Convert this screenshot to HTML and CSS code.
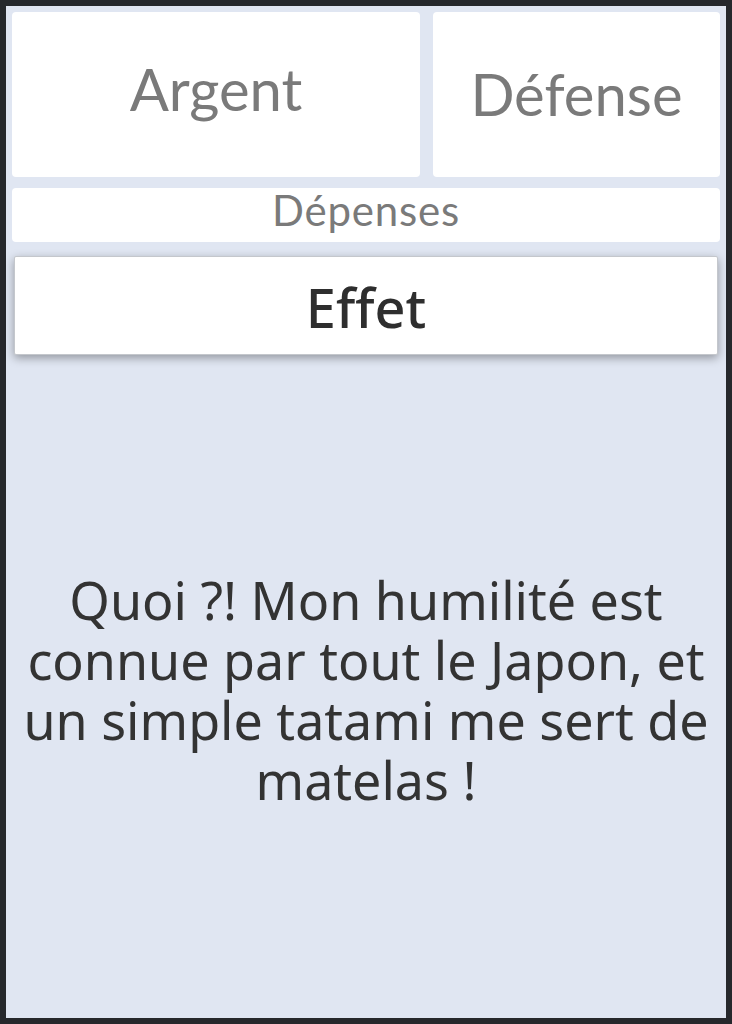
FILE: index.html
```html
<!DOCTYPE html>
<html lang="fr">
<head>
<meta charset="utf-8">
<title>Carte</title>
<link rel="stylesheet" href="styles.css">
</head>
<body>
<div class="frame">
  <div class="stats">
    <div class="card stat stat-argent"><span>Argent</span></div>
    <div class="card stat stat-defense"><span>Défense</span></div>
  </div>
  <div class="card depenses">Dépenses</div>
  <div class="card effet">Effet</div>
  <div class="desc">
    <p>Quoi ?! Mon humilité est connue par tout le Japon, et un simple tatami me sert de matelas !</p>
  </div>
</div>
</body>
</html>
```

FILE: styles.css
```css
html, body {
  margin: 0;
  padding: 0;
  background: #26282c;
}
.frame {
  margin: 6px;
  height: 1012px;
  box-sizing: border-box;
  background: #e0e6f2;
  padding: 6px;
  display: flex;
  flex-direction: column;
}
.card {
  background: #ffffff;
  border-radius: 4px;
}
.stats {
  display: grid;
  grid-template-columns: 408fr 287fr;
  gap: 13px;
  height: 165px;
}
.stat {
  display: flex;
  align-items: center;
  justify-content: center;
  font-family: "Lato", sans-serif;
  color: #7a7a7a;
}
.stat-argent span {
  font-size: 58px;
  margin-top: -12px;
}
.stat-defense span {
  font-size: 58px;
  margin-top: -2px;
}
.depenses {
  margin-top: 11px;
  height: 54px;
  display: flex;
  align-items: center;
  justify-content: center;
  font-family: "Lato", sans-serif;
  font-size: 42px;
  letter-spacing: 0.8px;
  color: #7a7a7a;
  padding-bottom: 10px;
  box-sizing: border-box;
}
.effet {
  margin: 14px 2px 0;
  height: 99px;
  box-sizing: border-box;
  border: 1px solid #c4c7cc;
  border-radius: 2px;
  box-shadow: 0 3px 10px rgba(0, 0, 0, 0.35);
  display: flex;
  align-items: center;
  justify-content: center;
  padding-top: 3px;
  font-family: "Noto Sans", sans-serif;
  font-weight: 500;
  font-size: 54px;
  color: #2e2e2e;
}
.desc {
  flex: 1;
  display: flex;
  align-items: center;
  justify-content: center;
  padding: 0 4px;
}
.desc p {
  margin: 13px 0 0;
  text-align: center;
  font-family: "Noto Sans", sans-serif;
  font-size: 52px;
  line-height: 60px;
  color: #333333;
}
```
